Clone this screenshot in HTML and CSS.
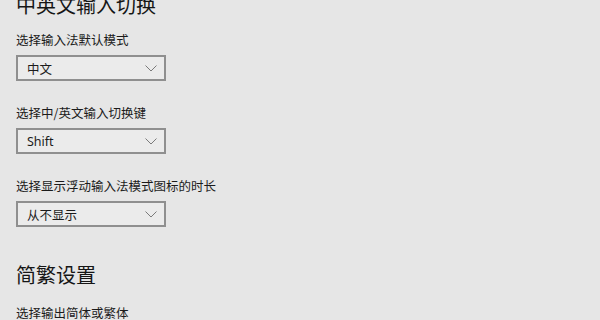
FILE: index.html
```html
<!DOCTYPE html>
<html lang="zh-CN">
<head>
<meta charset="utf-8">
<link rel="stylesheet" href="styles.css">
</head>
<body>
<div class="page">
  <h2 class="title title-first">中英文输入切换</h2>
  <div class="field">
    <div class="label">选择输入法默认模式</div>
    <div class="select"><span class="value">中文</span><svg class="chev" width="12" height="7" viewBox="0 0 12 7"><polyline points="0.5,0.5 6,6 11.5,0.5" fill="none" stroke="#7a7a7a" stroke-width="1"/></svg></div>
  </div>
  <div class="field">
    <div class="label">选择中/英文输入切换键</div>
    <div class="select"><span class="value">Shift</span><svg class="chev" width="12" height="7" viewBox="0 0 12 7"><polyline points="0.5,0.5 6,6 11.5,0.5" fill="none" stroke="#7a7a7a" stroke-width="1"/></svg></div>
  </div>
  <div class="field">
    <div class="label">选择显示浮动输入法模式图标的时长</div>
    <div class="select"><span class="value">从不显示</span><svg class="chev" width="12" height="7" viewBox="0 0 12 7"><polyline points="0.5,0.5 6,6 11.5,0.5" fill="none" stroke="#7a7a7a" stroke-width="1"/></svg></div>
  </div>
  <h2 class="title title-second">简繁设置</h2>
  <div class="label label-last">选择输出简体或繁体</div>
</div>
</body>
</html>
```
FILE: styles.css
```css
html, body {
  margin: 0;
  padding: 0;
  background: #e6e6e6;
  overflow: hidden;
}
body {
  width: 600px;
  height: 320px;
  font-family: "Noto Sans", "Noto Sans CJK SC", sans-serif;
  color: #1b1b1b;
}
.page {
  padding-left: 16px;
}
.title {
  margin: 0;
  font-family: "Noto Sans CJK SC", sans-serif;
  font-weight: 400;
  font-size: 20px;
  line-height: 28px;
  color: #161616;
}
.title-first {
  margin-top: -9.5px;
  margin-bottom: 11.5px;
}
.title-second {
  margin-top: 33.5px;
  margin-bottom: 14.5px;
}
.field {
  margin-bottom: 22px;
}
.label {
  font-family: "Noto Sans CJK SC", sans-serif;
  font-size: 12.5px;
  line-height: 20px;
  margin-bottom: 5px;
  color: #1b1b1b;
}
.select {
  box-sizing: border-box;
  width: 150px;
  height: 26px;
  border: 2px solid #8f8f8f;
  background: #ebebeb;
  display: flex;
  align-items: center;
  justify-content: space-between;
  padding: 0 7px 0 9px;
}
.value {
  font-family: "Noto Sans", "Noto Sans CJK SC", sans-serif;
  font-size: 12.5px;
  color: #1b1b1b;
}
.chev {
  display: block;
}
```
